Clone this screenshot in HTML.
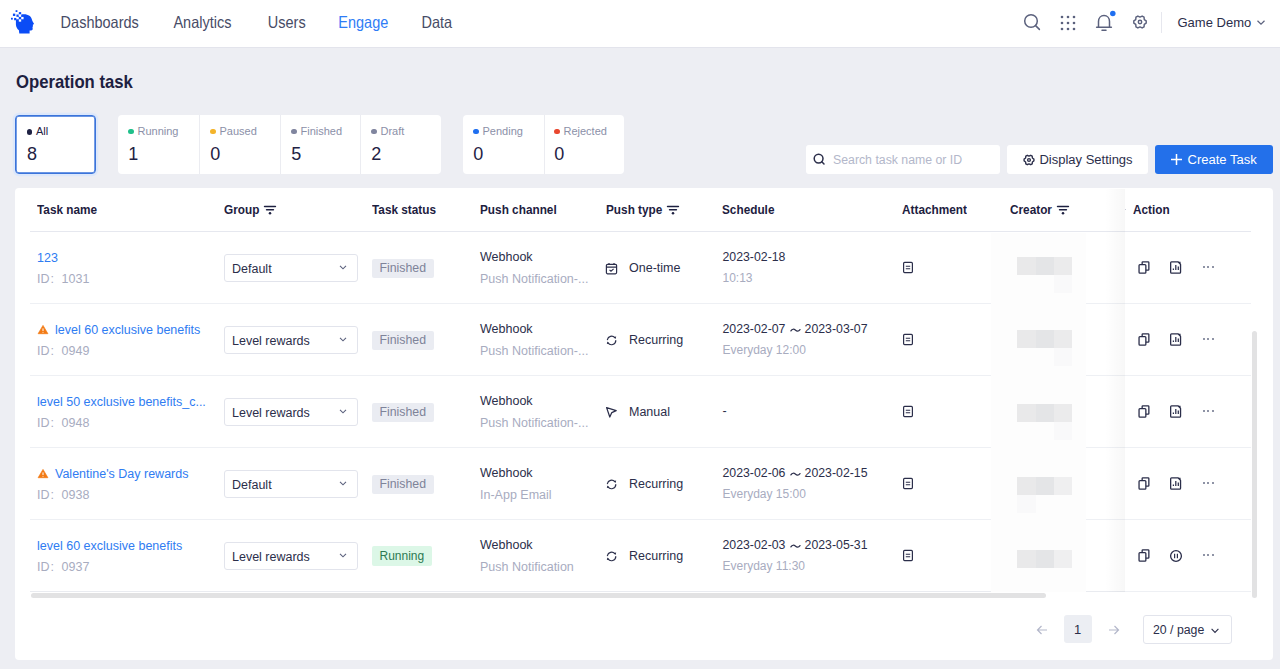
<!DOCTYPE html>
<html><head><meta charset="utf-8"><title>Operation task</title>
<style>
html,body{margin:0;padding:0;}
body{width:1280px;height:669px;overflow:hidden;position:relative;font-family:"Liberation Sans",sans-serif;background:#edeef3;}
.t{position:absolute;white-space:nowrap;line-height:1;}
.r{position:absolute;}
svg.r{overflow:visible;}
</style></head><body>
<div class="r" style="left:0px;top:0px;width:1280px;height:669px;background:#edeef3;"></div>
<div class="r" style="left:0px;top:0px;width:1280px;height:47px;background:#ffffff;"></div>
<div class="r" style="left:0px;top:47px;width:1280px;height:1px;background:#e3e4ec;"></div>
<svg class="r" style="left:9px;top:8px;" width="28" height="28" viewBox="0 0 28 28"><path fill="#0b4cf6" d="M10.3 25.4 L9.9 22.3 C8.2 20.8 7.0 18.8 6.9 16.4 L6.9 12.6 C7.5 8.8 10.8 6.2 14.8 6.2 C19.6 6.2 22.4 8.6 22.9 11.6 C23.2 13.2 24.0 14.2 24.9 15.6 C25.1 16.0 24.8 16.4 23.8 16.8 L24.0 18.3 L23.5 19.0 L23.7 21.0 C23.6 22.0 22.6 22.5 20.6 22.6 L20.6 25.4 Z"/><rect x="7.42" y="6.53" width="2.35" height="2.35" fill="#0b4cf6"/><rect x="9.82" y="4.12" width="2.35" height="2.35" fill="#0b4cf6"/><rect x="9.82" y="8.92" width="2.35" height="2.35" fill="#0b4cf6"/><rect x="3.92" y="5.62" width="2.35" height="2.35" fill="#0b4cf6"/><rect x="5.12" y="9.92" width="2.35" height="2.35" fill="#0b4cf6"/><rect x="2.00" y="9.80" width="1.8" height="1.8" fill="#0b4cf6"/><rect x="6.60" y="2.20" width="1.8" height="1.8" fill="#0b4cf6"/><rect x="9.82" y="6.53" width="2.35" height="2.35" fill="#fff"/><rect x="12.22" y="8.92" width="2.35" height="2.35" fill="#fff"/><rect x="9.82" y="11.32" width="2.35" height="2.35" fill="#fff"/><rect x="7.42" y="8.92" width="2.35" height="2.35" fill="#fff"/></svg>
<div class="t" style="left:60.6px;top:15.73px;font-size:14.5px;color:#474c66;font-weight:400;transform:scaleY(1.08);transform-origin:0 12.27px;">Dashboards</div>
<div class="t" style="left:173.4px;top:15.73px;font-size:14.5px;color:#474c66;font-weight:400;transform:scaleY(1.08);transform-origin:0 12.27px;">Analytics</div>
<div class="t" style="left:267.8px;top:15.73px;font-size:14.5px;color:#474c66;font-weight:400;transform:scaleY(1.08);transform-origin:0 12.27px;">Users</div>
<div class="t" style="left:338.3px;top:15.73px;font-size:14.5px;color:#2e7cf6;font-weight:400;transform:scaleY(1.08);transform-origin:0 12.27px;">Engage</div>
<div class="t" style="left:421.5px;top:15.73px;font-size:14.5px;color:#474c66;font-weight:400;transform:scaleY(1.08);transform-origin:0 12.27px;">Data</div>
<svg class="r" style="left:1023px;top:13px;" width="18" height="18" viewBox="0 0 18 18"><circle cx="8" cy="8" r="6.3" fill="none" stroke="#5b617d" stroke-width="1.5"/><path d="M12.6 12.6 L16.4 16.4" stroke="#5b617d" stroke-width="1.5" stroke-linecap="round"/></svg>
<svg class="r" style="left:1060px;top:14.5px;" width="16" height="16" viewBox="0 0 16 16"><circle cx="2" cy="2" r="1.3" fill="#5b617d"/><circle cx="2" cy="8" r="1.3" fill="#5b617d"/><circle cx="2" cy="14" r="1.3" fill="#5b617d"/><circle cx="8" cy="2" r="1.3" fill="#5b617d"/><circle cx="8" cy="8" r="1.3" fill="#5b617d"/><circle cx="8" cy="14" r="1.3" fill="#5b617d"/><circle cx="14" cy="2" r="1.3" fill="#5b617d"/><circle cx="14" cy="8" r="1.3" fill="#5b617d"/><circle cx="14" cy="14" r="1.3" fill="#5b617d"/></svg>
<svg class="r" style="left:1095px;top:13px;" width="18" height="19" viewBox="0 0 18 19"><path d="M3.5 14 L3.5 8.5 C3.5 5 5.8 2.6 9 2.6 C12.2 2.6 14.5 5 14.5 8.5 L14.5 14" fill="none" stroke="#5b617d" stroke-width="1.5"/><path d="M1.6 14.2 L16.4 14.2" stroke="#5b617d" stroke-width="1.5" stroke-linecap="round"/><path d="M7 17.2 L11 17.2" stroke="#5b617d" stroke-width="1.5" stroke-linecap="round"/></svg>
<svg class="r" style="left:1108px;top:8.5px;" width="10" height="10" viewBox="0 0 10 10"><circle cx="4.8" cy="4.4" r="2.75" fill="#1f6ff0"/></svg>
<svg class="r" style="left:1130.7px;top:13.2px;" width="18" height="18" viewBox="0 0 18 18"><path d="M15.20 7.91 L15.20 10.09 L13.24 11.45 L13.05 13.83 L11.15 14.92 L9.00 13.90 L6.85 14.92 L4.95 13.83 L4.76 11.45 L2.80 10.09 L2.80 7.91 L4.76 6.55 L4.95 4.17 L6.85 3.08 L9.00 4.10 L11.15 3.08 L13.05 4.17 L13.24 6.55 Z" fill="none" stroke="#5b617d" stroke-width="1.45" stroke-linejoin="round"/><circle cx="9" cy="9" r="1.7" fill="none" stroke="#5b617d" stroke-width="1.45"/></svg>
<div class="r" style="left:1161px;top:12px;width:1px;height:21px;background:#e6e7ee;"></div>
<div class="t" style="left:1177.5px;top:16.30px;font-size:13px;color:#2b2e4a;font-weight:400;transform:scaleY(1.05);transform-origin:0 11.00px;">Game Demo</div>
<svg class="r" style="left:1256px;top:19px;" width="10" height="7" viewBox="0 0 10 7"><path d="M1.5 1.8 L5 5.2 L8.5 1.8" fill="none" stroke="#5b617d" stroke-width="1.2"/></svg>
<div class="t" style="left:16px;top:74.66px;font-size:16.7px;color:#1d2040;font-weight:700;transform:scaleY(1.09);transform-origin:0 14.14px;">Operation task</div>
<div class="r" style="left:15px;top:115px;width:79px;height:57px;border:1px solid #3b74da;border-radius:4px;background:#fff;box-shadow:inset 0 0 0 0.7px #3b74da, 0 0 0 2.2px #dde8fb"></div>
<div class="r" style="left:26.799999999999997px;top:129.4px;width:5.2px;height:5.2px;border-radius:50%;background:#1f2244"></div>
<div class="t" style="left:36px;top:125.89px;font-size:11px;color:#1f2244;font-weight:400;">All</div>
<div class="t" style="left:27px;top:145.46px;font-size:18px;color:#1f2244;font-weight:400;">8</div>
<div class="r" style="left:118px;top:115px;width:323px;height:59px;background:#ffffff;border-radius:4px"></div>
<div class="r" style="left:199px;top:115px;width:1.2px;height:59px;background:#ebecf1;"></div>
<div class="r" style="left:280px;top:115px;width:1.2px;height:59px;background:#ebecf1;"></div>
<div class="r" style="left:360px;top:115px;width:1.2px;height:59px;background:#ebecf1;"></div>
<div class="r" style="left:463px;top:115px;width:161px;height:59px;background:#ffffff;border-radius:4px"></div>
<div class="r" style="left:543.5px;top:115px;width:1.2px;height:59px;background:#ebecf1;"></div>
<div class="r" style="left:128.4px;top:128.6px;width:5.2px;height:5.2px;border-radius:50%;background:#1fc08a"></div>
<div class="t" style="left:137.5px;top:125.89px;font-size:11px;color:#8b90a8;font-weight:400;">Running</div>
<div class="t" style="left:128.3px;top:144.56px;font-size:18px;color:#1f2244;font-weight:400;">1</div>
<div class="r" style="left:210.4px;top:128.6px;width:5.2px;height:5.2px;border-radius:50%;background:#f4b42a"></div>
<div class="t" style="left:219.5px;top:125.89px;font-size:11px;color:#8b90a8;font-weight:400;">Paused</div>
<div class="t" style="left:210.3px;top:144.56px;font-size:18px;color:#1f2244;font-weight:400;">0</div>
<div class="r" style="left:291.4px;top:128.6px;width:5.2px;height:5.2px;border-radius:50%;background:#80859f"></div>
<div class="t" style="left:300.5px;top:125.89px;font-size:11px;color:#8b90a8;font-weight:400;">Finished</div>
<div class="t" style="left:291.3px;top:144.56px;font-size:18px;color:#1f2244;font-weight:400;">5</div>
<div class="r" style="left:371.4px;top:128.6px;width:5.2px;height:5.2px;border-radius:50%;background:#80859f"></div>
<div class="t" style="left:380.5px;top:125.89px;font-size:11px;color:#8b90a8;font-weight:400;">Draft</div>
<div class="t" style="left:371.3px;top:144.56px;font-size:18px;color:#1f2244;font-weight:400;">2</div>
<div class="r" style="left:473.4px;top:128.6px;width:5.2px;height:5.2px;border-radius:50%;background:#1f6ff0"></div>
<div class="t" style="left:482.5px;top:125.89px;font-size:11px;color:#8b90a8;font-weight:400;">Pending</div>
<div class="t" style="left:473.3px;top:144.56px;font-size:18px;color:#1f2244;font-weight:400;">0</div>
<div class="r" style="left:554.4px;top:128.6px;width:5.2px;height:5.2px;border-radius:50%;background:#e9472f"></div>
<div class="t" style="left:563.5px;top:125.89px;font-size:11px;color:#8b90a8;font-weight:400;">Rejected</div>
<div class="t" style="left:554.3px;top:144.56px;font-size:18px;color:#1f2244;font-weight:400;">0</div>
<div class="r" style="left:806px;top:145px;width:194px;height:29px;background:#fff;border-radius:3px"></div>
<svg class="r" style="left:812px;top:152px;" width="14" height="14" viewBox="0 0 14 14"><circle cx="6.6" cy="6.6" r="4.4" fill="none" stroke="#2b2e4a" stroke-width="1.5"/><path d="M9.8 9.8 L12 12" stroke="#2b2e4a" stroke-width="1.5" stroke-linecap="round"/></svg>
<div class="t" style="left:833px;top:154.19px;font-size:12.3px;color:#b3b7ca;font-weight:400;">Search task name or ID</div>
<div class="r" style="left:1007px;top:145px;width:141px;height:29px;background:#fff;border-radius:3px"></div>
<svg class="r" style="left:1021.5px;top:152.5px;" width="14" height="14" viewBox="0 0 14 14"><path d="M11.92 6.13 L11.92 7.87 L10.38 8.95 L10.21 10.83 L8.71 11.70 L7.00 10.90 L5.29 11.70 L3.79 10.83 L3.62 8.95 L2.08 7.87 L2.08 6.13 L3.62 5.05 L3.79 3.17 L5.29 2.30 L7.00 3.10 L8.71 2.30 L10.21 3.17 L10.38 5.05 Z" fill="none" stroke="#2b2e4a" stroke-width="1.35" stroke-linejoin="round"/><circle cx="7" cy="7" r="1.4" fill="none" stroke="#2b2e4a" stroke-width="1.35"/></svg>
<div class="t" style="left:1039.4px;top:153.00px;font-size:13px;color:#2b2e4a;font-weight:400;transform:scaleY(1.04);transform-origin:0 11.00px;">Display Settings</div>
<div class="r" style="left:1155px;top:145px;width:118px;height:29px;background:#2370ea;border-radius:3px"></div>
<svg class="r" style="left:1170px;top:153px;" width="13" height="13" viewBox="0 0 13 13"><path d="M6.5 1 L6.5 12 M1 6.5 L12 6.5" stroke="#fff" stroke-width="1.5"/></svg>
<div class="t" style="left:1187.5px;top:153.00px;font-size:13px;color:#ffffff;font-weight:400;transform:scaleY(1.04);transform-origin:0 11.00px;">Create Task</div>
<div class="r" style="left:15px;top:188px;width:1258px;height:472px;background:#fff;border-radius:4px"></div>
<div class="t" style="left:37px;top:204.71px;font-size:11.8px;color:#1d2040;font-weight:700;transform:scaleY(1.14);transform-origin:0 9.99px;">Task name</div>
<div class="t" style="left:224px;top:204.71px;font-size:11.8px;color:#1d2040;font-weight:700;transform:scaleY(1.14);transform-origin:0 9.99px;">Group</div>
<svg class="r" style="left:263.5px;top:204.5px;" width="12" height="11" viewBox="0 0 12 11"><path d="M0.6 1.5 L11.4 1.5 M2.6 4.7 L9.4 4.7" stroke="#1d2040" stroke-width="1.6" stroke-linecap="round"/><circle cx="6" cy="8.3" r="1.25" fill="#1d2040"/></svg>
<div class="t" style="left:372px;top:204.71px;font-size:11.8px;color:#1d2040;font-weight:700;transform:scaleY(1.14);transform-origin:0 9.99px;">Task status</div>
<div class="t" style="left:480px;top:204.71px;font-size:11.8px;color:#1d2040;font-weight:700;transform:scaleY(1.14);transform-origin:0 9.99px;">Push channel</div>
<div class="t" style="left:606px;top:204.71px;font-size:11.8px;color:#1d2040;font-weight:700;transform:scaleY(1.14);transform-origin:0 9.99px;">Push type</div>
<svg class="r" style="left:666.5px;top:204.5px;" width="12" height="11" viewBox="0 0 12 11"><path d="M0.6 1.5 L11.4 1.5 M2.6 4.7 L9.4 4.7" stroke="#1d2040" stroke-width="1.6" stroke-linecap="round"/><circle cx="6" cy="8.3" r="1.25" fill="#1d2040"/></svg>
<div class="t" style="left:722px;top:204.71px;font-size:11.8px;color:#1d2040;font-weight:700;transform:scaleY(1.14);transform-origin:0 9.99px;">Schedule</div>
<div class="t" style="left:902px;top:204.71px;font-size:11.8px;color:#1d2040;font-weight:700;transform:scaleY(1.14);transform-origin:0 9.99px;">Attachment</div>
<div class="t" style="left:1010px;top:204.71px;font-size:11.8px;color:#1d2040;font-weight:700;transform:scaleY(1.14);transform-origin:0 9.99px;">Creator</div>
<svg class="r" style="left:1056.5px;top:204.5px;" width="12" height="11" viewBox="0 0 12 11"><path d="M0.6 1.5 L11.4 1.5 M2.6 4.7 L9.4 4.7" stroke="#1d2040" stroke-width="1.6" stroke-linecap="round"/><circle cx="6" cy="8.3" r="1.25" fill="#1d2040"/></svg>
<div class="r" style="left:30px;top:231px;width:1221px;height:1px;background:#e6e8ef;"></div>
<div class="t" style="left:37px;top:251.92px;font-size:12.5px;color:#2f7cf2;font-weight:400;">123</div>
<div class="t" style="left:37px;top:272.92px;font-size:12.5px;color:#a8acbf;font-weight:400;">ID</div>
<div class="t" style="left:50.6px;top:272.92px;font-size:12.5px;color:#a8acbf;font-weight:400;">:</div>
<div class="t" style="left:61.6px;top:272.92px;font-size:12.5px;color:#a8acbf;font-weight:400;">1031</div>
<div class="r" style="left:224px;top:254px;width:131.5px;height:26px;border:1px solid #e2e4ec;border-radius:3px;background:#fff"></div>
<div class="t" style="left:232px;top:262.82px;font-size:12.5px;color:#2b2e4a;font-weight:400;">Default</div>
<svg class="r" style="left:338px;top:264.3px;" width="10" height="7" viewBox="0 0 10 7"><path d="M2 1.8 L5 4.8 L8 1.8" fill="none" stroke="#5b617d" stroke-width="1.1"/></svg>
<div class="r" style="left:372px;top:259px;width:61.5px;height:19px;background:#eaecf2;border-radius:2px"></div>
<div class="t" style="left:379.5px;top:261.69px;font-size:12.3px;color:#7e8399;font-weight:400;">Finished</div>
<div class="t" style="left:480px;top:251.32px;font-size:12.5px;color:#2b2e4a;font-weight:400;">Webhook</div>
<div class="t" style="left:480px;top:272.92px;font-size:12.5px;color:#a8acbf;font-weight:400;">Push Notification-...</div>
<svg class="r" style="left:605px;top:261.5px;" width="13" height="13" viewBox="0 0 13 13"><rect x="1.4" y="2.4" width="10.2" height="9.4" rx="1.2" fill="none" stroke="#2b2e4a" stroke-width="1.2"/><path d="M1.4 5.2 L11.6 5.2 M4 1 L4 3 M9 1 L9 3" stroke="#2b2e4a" stroke-width="1.2"/><path d="M4.5 7.8 L6 9.2 L8.6 6.8" fill="none" stroke="#2b2e4a" stroke-width="1.1"/></svg>
<div class="t" style="left:629px;top:262.12px;font-size:12.5px;color:#2b2e4a;font-weight:400;">One-time</div>
<div class="t" style="left:722.5px;top:250.79px;font-size:12.3px;color:#2b2e4a;font-weight:400;">2023-02-18</div>
<div class="t" style="left:722.5px;top:272.14px;font-size:12px;color:#a8acbf;font-weight:400;">10:13</div>
<svg class="r" style="left:902px;top:261.0px;" width="12" height="13" viewBox="0 0 12 13"><rect x="1.6" y="1.4" width="8.8" height="10.2" rx="1" fill="none" stroke="#2b2e4a" stroke-width="1.2"/><path d="M3.8 5.2 L8.2 5.2 M3.8 7.8 L8.2 7.8" stroke="#2b2e4a" stroke-width="1.1"/></svg>
<div class="r" style="left:30px;top:303px;width:1221px;height:1px;background:#eef0f4;"></div>
<svg class="r" style="left:37px;top:323.0px;" width="12" height="12" viewBox="0 0 12 12"><path d="M6 2.4 L10.9 10.7 L1.1 10.7 Z" fill="#f27a14" stroke="#f27a14" stroke-width="0.7" stroke-linejoin="round"/><path d="M6 5.4 L6 8.0 M6 8.9 L6 9.7" stroke="#fff" stroke-width="1.0"/></svg>
<div class="t" style="left:55px;top:323.92px;font-size:12.5px;color:#2f7cf2;font-weight:400;">level 60 exclusive benefits</div>
<div class="t" style="left:37px;top:344.92px;font-size:12.5px;color:#a8acbf;font-weight:400;">ID</div>
<div class="t" style="left:50.6px;top:344.92px;font-size:12.5px;color:#a8acbf;font-weight:400;">:</div>
<div class="t" style="left:61.6px;top:344.92px;font-size:12.5px;color:#a8acbf;font-weight:400;">0949</div>
<div class="r" style="left:224px;top:326px;width:131.5px;height:26px;border:1px solid #e2e4ec;border-radius:3px;background:#fff"></div>
<div class="t" style="left:232px;top:334.82px;font-size:12.5px;color:#2b2e4a;font-weight:400;">Level rewards</div>
<svg class="r" style="left:338px;top:336.3px;" width="10" height="7" viewBox="0 0 10 7"><path d="M2 1.8 L5 4.8 L8 1.8" fill="none" stroke="#5b617d" stroke-width="1.1"/></svg>
<div class="r" style="left:372px;top:331px;width:61.5px;height:19px;background:#eaecf2;border-radius:2px"></div>
<div class="t" style="left:379.5px;top:333.69px;font-size:12.3px;color:#7e8399;font-weight:400;">Finished</div>
<div class="t" style="left:480px;top:323.32px;font-size:12.5px;color:#2b2e4a;font-weight:400;">Webhook</div>
<div class="t" style="left:480px;top:344.92px;font-size:12.5px;color:#a8acbf;font-weight:400;">Push Notification-...</div>
<svg class="r" style="left:605px;top:333.0px;" width="13" height="13" viewBox="0 0 13 13"><path d="M2.4 6.6 A4.3 4.3 0 0 1 9.8 4.6" fill="none" stroke="#2b2e4a" stroke-width="1.2" stroke-linecap="round"/><path d="M10.8 7.6 A4.3 4.3 0 0 1 3.0 9.9" fill="none" stroke="#2b2e4a" stroke-width="1.2" stroke-linecap="round"/><path d="M8.6 4.0 L11.2 3.4 L10.6 6.0 Z" fill="#2b2e4a"/><path d="M4.4 10.5 L1.8 11.1 L2.4 8.5 Z" fill="#2b2e4a"/></svg>
<div class="t" style="left:629px;top:334.12px;font-size:12.5px;color:#2b2e4a;font-weight:400;">Recurring</div>
<div class="t" style="left:722.5px;top:322.79px;font-size:12.3px;color:#2b2e4a;font-weight:400;">2023-02-07</div>
<svg class="r" style="left:789.5px;top:327.5px;" width="11" height="5" viewBox="0 0 11 5"><path d="M0.9 2.9 C2.2 0.9 3.9 0.8 5.3 2 C6.7 3.2 8.4 3.9 10 1.6" fill="none" stroke="#2b2e4a" stroke-width="1.25" stroke-linecap="round"/></svg>
<div class="t" style="left:804.6px;top:322.79px;font-size:12.3px;color:#2b2e4a;font-weight:400;">2023-03-07</div>
<div class="t" style="left:722.5px;top:344.14px;font-size:12px;color:#a8acbf;font-weight:400;">Everyday 12:00</div>
<svg class="r" style="left:902px;top:333.0px;" width="12" height="13" viewBox="0 0 12 13"><rect x="1.6" y="1.4" width="8.8" height="10.2" rx="1" fill="none" stroke="#2b2e4a" stroke-width="1.2"/><path d="M3.8 5.2 L8.2 5.2 M3.8 7.8 L8.2 7.8" stroke="#2b2e4a" stroke-width="1.1"/></svg>
<div class="r" style="left:30px;top:375px;width:1221px;height:1px;background:#eef0f4;"></div>
<div class="t" style="left:37px;top:395.92px;font-size:12.5px;color:#2f7cf2;font-weight:400;">level 50 exclusive benefits_c...</div>
<div class="t" style="left:37px;top:416.92px;font-size:12.5px;color:#a8acbf;font-weight:400;">ID</div>
<div class="t" style="left:50.6px;top:416.92px;font-size:12.5px;color:#a8acbf;font-weight:400;">:</div>
<div class="t" style="left:61.6px;top:416.92px;font-size:12.5px;color:#a8acbf;font-weight:400;">0948</div>
<div class="r" style="left:224px;top:398px;width:131.5px;height:26px;border:1px solid #e2e4ec;border-radius:3px;background:#fff"></div>
<div class="t" style="left:232px;top:406.82px;font-size:12.5px;color:#2b2e4a;font-weight:400;">Level rewards</div>
<svg class="r" style="left:338px;top:408.3px;" width="10" height="7" viewBox="0 0 10 7"><path d="M2 1.8 L5 4.8 L8 1.8" fill="none" stroke="#5b617d" stroke-width="1.1"/></svg>
<div class="r" style="left:372px;top:403px;width:61.5px;height:19px;background:#eaecf2;border-radius:2px"></div>
<div class="t" style="left:379.5px;top:405.69px;font-size:12.3px;color:#7e8399;font-weight:400;">Finished</div>
<div class="t" style="left:480px;top:395.32px;font-size:12.5px;color:#2b2e4a;font-weight:400;">Webhook</div>
<div class="t" style="left:480px;top:416.92px;font-size:12.5px;color:#a8acbf;font-weight:400;">Push Notification-...</div>
<svg class="r" style="left:605px;top:405.5px;" width="13" height="13" viewBox="0 0 13 13"><path d="M1.6 1.6 L11.2 4.6 L6.8 6.6 L4.8 11 Z" fill="none" stroke="#2b2e4a" stroke-width="1.25" stroke-linejoin="round"/></svg>
<div class="t" style="left:629px;top:406.12px;font-size:12.5px;color:#2b2e4a;font-weight:400;">Manual</div>
<div class="t" style="left:722.5px;top:405.42px;font-size:12.5px;color:#2b2e4a;font-weight:400;">-</div>
<svg class="r" style="left:902px;top:405.0px;" width="12" height="13" viewBox="0 0 12 13"><rect x="1.6" y="1.4" width="8.8" height="10.2" rx="1" fill="none" stroke="#2b2e4a" stroke-width="1.2"/><path d="M3.8 5.2 L8.2 5.2 M3.8 7.8 L8.2 7.8" stroke="#2b2e4a" stroke-width="1.1"/></svg>
<div class="r" style="left:30px;top:447px;width:1221px;height:1px;background:#eef0f4;"></div>
<svg class="r" style="left:37px;top:467.0px;" width="12" height="12" viewBox="0 0 12 12"><path d="M6 2.4 L10.9 10.7 L1.1 10.7 Z" fill="#f27a14" stroke="#f27a14" stroke-width="0.7" stroke-linejoin="round"/><path d="M6 5.4 L6 8.0 M6 8.9 L6 9.7" stroke="#fff" stroke-width="1.0"/></svg>
<div class="t" style="left:55px;top:467.92px;font-size:12.5px;color:#2f7cf2;font-weight:400;">Valentine's Day rewards</div>
<div class="t" style="left:37px;top:488.92px;font-size:12.5px;color:#a8acbf;font-weight:400;">ID</div>
<div class="t" style="left:50.6px;top:488.92px;font-size:12.5px;color:#a8acbf;font-weight:400;">:</div>
<div class="t" style="left:61.6px;top:488.92px;font-size:12.5px;color:#a8acbf;font-weight:400;">0938</div>
<div class="r" style="left:224px;top:470px;width:131.5px;height:26px;border:1px solid #e2e4ec;border-radius:3px;background:#fff"></div>
<div class="t" style="left:232px;top:478.82px;font-size:12.5px;color:#2b2e4a;font-weight:400;">Default</div>
<svg class="r" style="left:338px;top:480.3px;" width="10" height="7" viewBox="0 0 10 7"><path d="M2 1.8 L5 4.8 L8 1.8" fill="none" stroke="#5b617d" stroke-width="1.1"/></svg>
<div class="r" style="left:372px;top:475px;width:61.5px;height:19px;background:#eaecf2;border-radius:2px"></div>
<div class="t" style="left:379.5px;top:477.69px;font-size:12.3px;color:#7e8399;font-weight:400;">Finished</div>
<div class="t" style="left:480px;top:467.32px;font-size:12.5px;color:#2b2e4a;font-weight:400;">Webhook</div>
<div class="t" style="left:480px;top:488.92px;font-size:12.5px;color:#a8acbf;font-weight:400;">In-App Email</div>
<svg class="r" style="left:605px;top:477.0px;" width="13" height="13" viewBox="0 0 13 13"><path d="M2.4 6.6 A4.3 4.3 0 0 1 9.8 4.6" fill="none" stroke="#2b2e4a" stroke-width="1.2" stroke-linecap="round"/><path d="M10.8 7.6 A4.3 4.3 0 0 1 3.0 9.9" fill="none" stroke="#2b2e4a" stroke-width="1.2" stroke-linecap="round"/><path d="M8.6 4.0 L11.2 3.4 L10.6 6.0 Z" fill="#2b2e4a"/><path d="M4.4 10.5 L1.8 11.1 L2.4 8.5 Z" fill="#2b2e4a"/></svg>
<div class="t" style="left:629px;top:478.12px;font-size:12.5px;color:#2b2e4a;font-weight:400;">Recurring</div>
<div class="t" style="left:722.5px;top:466.79px;font-size:12.3px;color:#2b2e4a;font-weight:400;">2023-02-06</div>
<svg class="r" style="left:789.5px;top:471.5px;" width="11" height="5" viewBox="0 0 11 5"><path d="M0.9 2.9 C2.2 0.9 3.9 0.8 5.3 2 C6.7 3.2 8.4 3.9 10 1.6" fill="none" stroke="#2b2e4a" stroke-width="1.25" stroke-linecap="round"/></svg>
<div class="t" style="left:804.6px;top:466.79px;font-size:12.3px;color:#2b2e4a;font-weight:400;">2023-02-15</div>
<div class="t" style="left:722.5px;top:488.14px;font-size:12px;color:#a8acbf;font-weight:400;">Everyday 15:00</div>
<svg class="r" style="left:902px;top:477.0px;" width="12" height="13" viewBox="0 0 12 13"><rect x="1.6" y="1.4" width="8.8" height="10.2" rx="1" fill="none" stroke="#2b2e4a" stroke-width="1.2"/><path d="M3.8 5.2 L8.2 5.2 M3.8 7.8 L8.2 7.8" stroke="#2b2e4a" stroke-width="1.1"/></svg>
<div class="r" style="left:30px;top:519px;width:1221px;height:1px;background:#eef0f4;"></div>
<div class="t" style="left:37px;top:539.92px;font-size:12.5px;color:#2f7cf2;font-weight:400;">level 60 exclusive benefits</div>
<div class="t" style="left:37px;top:560.92px;font-size:12.5px;color:#a8acbf;font-weight:400;">ID</div>
<div class="t" style="left:50.6px;top:560.92px;font-size:12.5px;color:#a8acbf;font-weight:400;">:</div>
<div class="t" style="left:61.6px;top:560.92px;font-size:12.5px;color:#a8acbf;font-weight:400;">0937</div>
<div class="r" style="left:224px;top:542px;width:131.5px;height:26px;border:1px solid #e2e4ec;border-radius:3px;background:#fff"></div>
<div class="t" style="left:232px;top:550.82px;font-size:12.5px;color:#2b2e4a;font-weight:400;">Level rewards</div>
<svg class="r" style="left:338px;top:552.3px;" width="10" height="7" viewBox="0 0 10 7"><path d="M2 1.8 L5 4.8 L8 1.8" fill="none" stroke="#5b617d" stroke-width="1.1"/></svg>
<div class="r" style="left:372px;top:546px;width:60px;height:20px;background:#dcf7e7;border-radius:2px"></div>
<div class="t" style="left:379.5px;top:549.54px;font-size:12px;color:#2c7a52;font-weight:400;">Running</div>
<div class="t" style="left:480px;top:539.32px;font-size:12.5px;color:#2b2e4a;font-weight:400;">Webhook</div>
<div class="t" style="left:480px;top:560.92px;font-size:12.5px;color:#a8acbf;font-weight:400;">Push Notification</div>
<svg class="r" style="left:605px;top:549.0px;" width="13" height="13" viewBox="0 0 13 13"><path d="M2.4 6.6 A4.3 4.3 0 0 1 9.8 4.6" fill="none" stroke="#2b2e4a" stroke-width="1.2" stroke-linecap="round"/><path d="M10.8 7.6 A4.3 4.3 0 0 1 3.0 9.9" fill="none" stroke="#2b2e4a" stroke-width="1.2" stroke-linecap="round"/><path d="M8.6 4.0 L11.2 3.4 L10.6 6.0 Z" fill="#2b2e4a"/><path d="M4.4 10.5 L1.8 11.1 L2.4 8.5 Z" fill="#2b2e4a"/></svg>
<div class="t" style="left:629px;top:550.12px;font-size:12.5px;color:#2b2e4a;font-weight:400;">Recurring</div>
<div class="t" style="left:722.5px;top:538.79px;font-size:12.3px;color:#2b2e4a;font-weight:400;">2023-02-03</div>
<svg class="r" style="left:789.5px;top:543.5px;" width="11" height="5" viewBox="0 0 11 5"><path d="M0.9 2.9 C2.2 0.9 3.9 0.8 5.3 2 C6.7 3.2 8.4 3.9 10 1.6" fill="none" stroke="#2b2e4a" stroke-width="1.25" stroke-linecap="round"/></svg>
<div class="t" style="left:804.6px;top:538.79px;font-size:12.3px;color:#2b2e4a;font-weight:400;">2023-05-31</div>
<div class="t" style="left:722.5px;top:560.14px;font-size:12px;color:#a8acbf;font-weight:400;">Everyday 11:30</div>
<svg class="r" style="left:902px;top:549.0px;" width="12" height="13" viewBox="0 0 12 13"><rect x="1.6" y="1.4" width="8.8" height="10.2" rx="1" fill="none" stroke="#2b2e4a" stroke-width="1.2"/><path d="M3.8 5.2 L8.2 5.2 M3.8 7.8 L8.2 7.8" stroke="#2b2e4a" stroke-width="1.1"/></svg>
<div class="r" style="left:30px;top:591px;width:1221px;height:1px;background:#e9ebf0;"></div>
<div class="r" style="left:991px;top:233px;width:95px;height:359px;background:#fdfdfd;"></div>
<div class="r" style="left:1017px;top:257px;width:19px;height:18px;background:#e9e9ea;"></div>
<div class="r" style="left:1036px;top:257px;width:18px;height:18px;background:#e4e5e7;"></div>
<div class="r" style="left:1054px;top:257px;width:18px;height:18px;background:#ebebec;"></div>
<div class="r" style="left:1054px;top:275px;width:18px;height:18px;background:#f9f9fa;"></div>
<div class="r" style="left:1017px;top:330px;width:19px;height:18px;background:#e9e9ea;"></div>
<div class="r" style="left:1036px;top:330px;width:18px;height:18px;background:#e4e5e7;"></div>
<div class="r" style="left:1054px;top:330px;width:18px;height:18px;background:#ebebec;"></div>
<div class="r" style="left:1054px;top:348px;width:18px;height:18px;background:#f9f9fa;"></div>
<div class="r" style="left:1017px;top:404px;width:19px;height:18px;background:#e9e9ea;"></div>
<div class="r" style="left:1036px;top:404px;width:18px;height:18px;background:#e4e5e7;"></div>
<div class="r" style="left:1054px;top:404px;width:18px;height:18px;background:#ebebec;"></div>
<div class="r" style="left:1054px;top:422px;width:18px;height:18px;background:#f9f9fa;"></div>
<div class="r" style="left:1017px;top:477px;width:19px;height:18px;background:#e9e9ea;"></div>
<div class="r" style="left:1036px;top:477px;width:18px;height:18px;background:#e4e5e7;"></div>
<div class="r" style="left:1054px;top:477px;width:18px;height:18px;background:#efeff0;"></div>
<div class="r" style="left:1017px;top:495px;width:19px;height:18px;background:#f9f9fa;"></div>
<div class="r" style="left:1017px;top:550px;width:19px;height:18px;background:#e9e9ea;"></div>
<div class="r" style="left:1036px;top:550px;width:18px;height:18px;background:#e4e5e7;"></div>
<div class="r" style="left:1054px;top:550px;width:18px;height:18px;background:#efeff0;"></div>
<div class="r" style="left:1105px;top:189px;width:20px;height:403px;background:linear-gradient(to right, rgba(0,0,0,0), rgba(0,0,0,0.03))"></div>
<div class="r" style="left:1125px;top:189px;width:126px;height:403px;background:#fff;"></div>
<div class="r" style="left:1125px;top:231px;width:126px;height:1px;background:#e6e8ef;"></div>
<div class="r" style="left:1125px;top:303px;width:126px;height:1px;background:#eef0f4;"></div>
<div class="r" style="left:1125px;top:375px;width:126px;height:1px;background:#eef0f4;"></div>
<div class="r" style="left:1125px;top:447px;width:126px;height:1px;background:#eef0f4;"></div>
<div class="r" style="left:1125px;top:519px;width:126px;height:1px;background:#eef0f4;"></div>
<div class="r" style="left:1125px;top:591px;width:126px;height:1px;background:#eef0f4;"></div>
<div class="t" style="left:1133px;top:204.71px;font-size:11.8px;color:#1d2040;font-weight:700;transform:scaleY(1.14);transform-origin:0 9.99px;">Action</div>
<div class="r" style="left:1124.5px;top:208.5px;width:1.5px;height:1.5px;background:#c9cbd6;"></div>
<svg class="r" style="left:1136.5px;top:260.0px;" width="14" height="14" viewBox="0 0 14 14"><rect x="2.05" y="4.65" width="6.8" height="8.5" rx="0.9" fill="#fff" stroke="#2b2e4a" stroke-width="1.3"/><path d="M5.15 4.65 L5.15 2.6 C5.15 2.2 5.45 1.85 5.85 1.85 L11.15 1.85 C11.55 1.85 11.85 2.2 11.85 2.6 L11.85 9.45 C11.85 9.85 11.55 10.15 11.15 10.15 L8.85 10.15" fill="none" stroke="#2b2e4a" stroke-width="1.3"/></svg>
<svg class="r" style="left:1169px;top:260.0px;" width="14" height="14" viewBox="0 0 14 14"><path d="M1.65 2.75 C1.65 2.25 2.05 1.85 2.55 1.85 L9.0 1.85 L11.55 4.4 L11.55 12.25 C11.55 12.75 11.15 13.15 10.65 13.15 L2.55 13.15 C2.05 13.15 1.65 12.75 1.65 12.25 Z" fill="none" stroke="#2b2e4a" stroke-width="1.3"/><path d="M8.6 1.85 L11.55 1.85 L11.55 4.8 Z" fill="#2b2e4a"/><path d="M4.4 8.4 L4.4 10.0 M6.8 4.9 L6.8 10.0 M9.3 6.5 L9.3 10.0" stroke="#2b2e4a" stroke-width="1.25"/></svg>
<div class="r" style="left:1202.6px;top:266.3px;width:2.1px;height:2.1px;border-radius:50%;background:#6a7089"></div>
<div class="r" style="left:1207.3px;top:266.3px;width:2.1px;height:2.1px;border-radius:50%;background:#6a7089"></div>
<div class="r" style="left:1212.0px;top:266.3px;width:2.1px;height:2.1px;border-radius:50%;background:#6a7089"></div>
<svg class="r" style="left:1136.5px;top:332.0px;" width="14" height="14" viewBox="0 0 14 14"><rect x="2.05" y="4.65" width="6.8" height="8.5" rx="0.9" fill="#fff" stroke="#2b2e4a" stroke-width="1.3"/><path d="M5.15 4.65 L5.15 2.6 C5.15 2.2 5.45 1.85 5.85 1.85 L11.15 1.85 C11.55 1.85 11.85 2.2 11.85 2.6 L11.85 9.45 C11.85 9.85 11.55 10.15 11.15 10.15 L8.85 10.15" fill="none" stroke="#2b2e4a" stroke-width="1.3"/></svg>
<svg class="r" style="left:1169px;top:332.0px;" width="14" height="14" viewBox="0 0 14 14"><path d="M1.65 2.75 C1.65 2.25 2.05 1.85 2.55 1.85 L9.0 1.85 L11.55 4.4 L11.55 12.25 C11.55 12.75 11.15 13.15 10.65 13.15 L2.55 13.15 C2.05 13.15 1.65 12.75 1.65 12.25 Z" fill="none" stroke="#2b2e4a" stroke-width="1.3"/><path d="M8.6 1.85 L11.55 1.85 L11.55 4.8 Z" fill="#2b2e4a"/><path d="M4.4 8.4 L4.4 10.0 M6.8 4.9 L6.8 10.0 M9.3 6.5 L9.3 10.0" stroke="#2b2e4a" stroke-width="1.25"/></svg>
<div class="r" style="left:1202.6px;top:338.3px;width:2.1px;height:2.1px;border-radius:50%;background:#6a7089"></div>
<div class="r" style="left:1207.3px;top:338.3px;width:2.1px;height:2.1px;border-radius:50%;background:#6a7089"></div>
<div class="r" style="left:1212.0px;top:338.3px;width:2.1px;height:2.1px;border-radius:50%;background:#6a7089"></div>
<svg class="r" style="left:1136.5px;top:404.0px;" width="14" height="14" viewBox="0 0 14 14"><rect x="2.05" y="4.65" width="6.8" height="8.5" rx="0.9" fill="#fff" stroke="#2b2e4a" stroke-width="1.3"/><path d="M5.15 4.65 L5.15 2.6 C5.15 2.2 5.45 1.85 5.85 1.85 L11.15 1.85 C11.55 1.85 11.85 2.2 11.85 2.6 L11.85 9.45 C11.85 9.85 11.55 10.15 11.15 10.15 L8.85 10.15" fill="none" stroke="#2b2e4a" stroke-width="1.3"/></svg>
<svg class="r" style="left:1169px;top:404.0px;" width="14" height="14" viewBox="0 0 14 14"><path d="M1.65 2.75 C1.65 2.25 2.05 1.85 2.55 1.85 L9.0 1.85 L11.55 4.4 L11.55 12.25 C11.55 12.75 11.15 13.15 10.65 13.15 L2.55 13.15 C2.05 13.15 1.65 12.75 1.65 12.25 Z" fill="none" stroke="#2b2e4a" stroke-width="1.3"/><path d="M8.6 1.85 L11.55 1.85 L11.55 4.8 Z" fill="#2b2e4a"/><path d="M4.4 8.4 L4.4 10.0 M6.8 4.9 L6.8 10.0 M9.3 6.5 L9.3 10.0" stroke="#2b2e4a" stroke-width="1.25"/></svg>
<div class="r" style="left:1202.6px;top:410.3px;width:2.1px;height:2.1px;border-radius:50%;background:#6a7089"></div>
<div class="r" style="left:1207.3px;top:410.3px;width:2.1px;height:2.1px;border-radius:50%;background:#6a7089"></div>
<div class="r" style="left:1212.0px;top:410.3px;width:2.1px;height:2.1px;border-radius:50%;background:#6a7089"></div>
<svg class="r" style="left:1136.5px;top:476.0px;" width="14" height="14" viewBox="0 0 14 14"><rect x="2.05" y="4.65" width="6.8" height="8.5" rx="0.9" fill="#fff" stroke="#2b2e4a" stroke-width="1.3"/><path d="M5.15 4.65 L5.15 2.6 C5.15 2.2 5.45 1.85 5.85 1.85 L11.15 1.85 C11.55 1.85 11.85 2.2 11.85 2.6 L11.85 9.45 C11.85 9.85 11.55 10.15 11.15 10.15 L8.85 10.15" fill="none" stroke="#2b2e4a" stroke-width="1.3"/></svg>
<svg class="r" style="left:1169px;top:476.0px;" width="14" height="14" viewBox="0 0 14 14"><path d="M1.65 2.75 C1.65 2.25 2.05 1.85 2.55 1.85 L9.0 1.85 L11.55 4.4 L11.55 12.25 C11.55 12.75 11.15 13.15 10.65 13.15 L2.55 13.15 C2.05 13.15 1.65 12.75 1.65 12.25 Z" fill="none" stroke="#2b2e4a" stroke-width="1.3"/><path d="M8.6 1.85 L11.55 1.85 L11.55 4.8 Z" fill="#2b2e4a"/><path d="M4.4 8.4 L4.4 10.0 M6.8 4.9 L6.8 10.0 M9.3 6.5 L9.3 10.0" stroke="#2b2e4a" stroke-width="1.25"/></svg>
<div class="r" style="left:1202.6px;top:482.3px;width:2.1px;height:2.1px;border-radius:50%;background:#6a7089"></div>
<div class="r" style="left:1207.3px;top:482.3px;width:2.1px;height:2.1px;border-radius:50%;background:#6a7089"></div>
<div class="r" style="left:1212.0px;top:482.3px;width:2.1px;height:2.1px;border-radius:50%;background:#6a7089"></div>
<svg class="r" style="left:1136.5px;top:548.0px;" width="14" height="14" viewBox="0 0 14 14"><rect x="2.05" y="4.65" width="6.8" height="8.5" rx="0.9" fill="#fff" stroke="#2b2e4a" stroke-width="1.3"/><path d="M5.15 4.65 L5.15 2.6 C5.15 2.2 5.45 1.85 5.85 1.85 L11.15 1.85 C11.55 1.85 11.85 2.2 11.85 2.6 L11.85 9.45 C11.85 9.85 11.55 10.15 11.15 10.15 L8.85 10.15" fill="none" stroke="#2b2e4a" stroke-width="1.3"/></svg>
<svg class="r" style="left:1169px;top:548.5px;" width="14" height="14" viewBox="0 0 14 14"><circle cx="7" cy="7" r="5.4" fill="none" stroke="#2b2e4a" stroke-width="1.3"/><path d="M5.6 4.8 L5.6 9.2 M8.4 4.8 L8.4 9.2" stroke="#2b2e4a" stroke-width="1.2"/></svg>
<div class="r" style="left:1202.6px;top:554.3px;width:2.1px;height:2.1px;border-radius:50%;background:#6a7089"></div>
<div class="r" style="left:1207.3px;top:554.3px;width:2.1px;height:2.1px;border-radius:50%;background:#6a7089"></div>
<div class="r" style="left:1212.0px;top:554.3px;width:2.1px;height:2.1px;border-radius:50%;background:#6a7089"></div>
<div class="r" style="left:31px;top:593px;width:1015px;height:5px;background:#e2e2e3;border-radius:3px"></div>
<div class="r" style="left:1252px;top:331px;width:5.2px;height:267px;background:#e2e2e3;border-radius:3px"></div>
<svg class="r" style="left:1035px;top:623px;" width="14" height="14" viewBox="0 0 14 14"><path d="M12 7 L2.5 7 M6.5 3 L2.5 7 L6.5 11" fill="none" stroke="#b3b7ca" stroke-width="1.2"/></svg>
<div class="r" style="left:1064px;top:615px;width:28px;height:28px;background:#eceef3;border-radius:3px"></div>
<div class="t" style="left:1074px;top:623.00px;font-size:13px;color:#2b2e4a;font-weight:400;">1</div>
<svg class="r" style="left:1107px;top:623px;" width="14" height="14" viewBox="0 0 14 14"><path d="M2 7 L11.5 7 M7.5 3 L11.5 7 L7.5 11" fill="none" stroke="#b3b7ca" stroke-width="1.2"/></svg>
<div class="r" style="left:1142.5px;top:615px;width:87px;height:26.5px;border:1px solid #e2e4ec;border-radius:3px;background:#fff"></div>
<div class="t" style="left:1153px;top:623.59px;font-size:12.3px;color:#2b2e4a;font-weight:400;">20 / page</div>
<svg class="r" style="left:1210px;top:626.5px;" width="10" height="8" viewBox="0 0 10 8"><path d="M1.6 1.8 L5 5.4 L8.4 1.8" fill="none" stroke="#2b2e4a" stroke-width="1.1"/></svg>
</body></html>
